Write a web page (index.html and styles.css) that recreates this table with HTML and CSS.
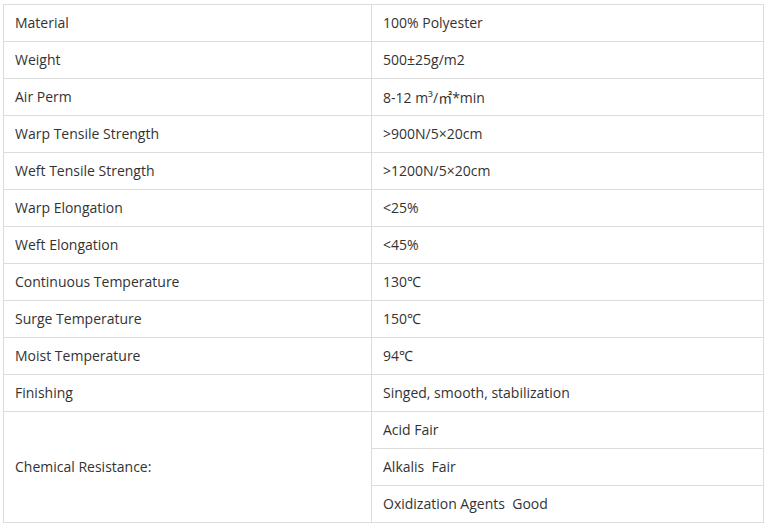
FILE: index.html
```html
<!DOCTYPE html>
<html>
<head>
<meta charset="utf-8">
<link rel="stylesheet" href="styles.css">
</head>
<body>
<table class="spec">
<colgroup><col class="c1"><col class="c2"></colgroup>
<tbody>
<tr><td>Material</td><td>100% Polyester</td></tr>
<tr><td>Weight</td><td>500±25g/m2</td></tr>
<tr><td>Air Perm</td><td>8-12 m³/<span class="cjk">㎡</span>*min</td></tr>
<tr><td>Warp Tensile Strength</td><td>&gt;900N/5×20cm</td></tr>
<tr><td>Weft Tensile Strength</td><td>&gt;1200N/5×20cm</td></tr>
<tr><td>Warp Elongation</td><td>&lt;25%</td></tr>
<tr><td>Weft Elongation</td><td>&lt;45%</td></tr>
<tr><td>Continuous Temperature</td><td>130℃</td></tr>
<tr><td>Surge Temperature</td><td>150℃</td></tr>
<tr><td>Moist Temperature</td><td>94℃</td></tr>
<tr><td>Finishing</td><td>Singed, smooth, stabilization</td></tr>
<tr><td rowspan="3">Chemical Resistance:</td><td>Acid Fair</td></tr>
<tr><td>Alkalis&nbsp; Fair</td></tr>
<tr><td>Oxidization Agents&nbsp; Good</td></tr>
</tbody>
</table>
</body>
</html>
```
FILE: styles.css
```css
html, body {
  margin: 0;
  padding: 0;
  background: #fff;
}
body {
  padding: 4px 0 0 3px;
}
.spec {
  border-collapse: collapse;
  width: 760px;
  table-layout: fixed;
  font-family: "Open Sans", "Noto Sans", "Noto Sans CJK SC", sans-serif;
  font-size: 14px;
  color: #333;
}
.c1 { width: 368px; }
.c2 { width: 392px; }
.spec td {
  border: 1px solid #dcdcdc;
  height: 37px;
  padding: 0 11px;
  box-sizing: border-box;
  vertical-align: middle;
  line-height: 20px;
}
.cjk {
  font-family: "Noto Sans CJK SC", sans-serif;
}
```
